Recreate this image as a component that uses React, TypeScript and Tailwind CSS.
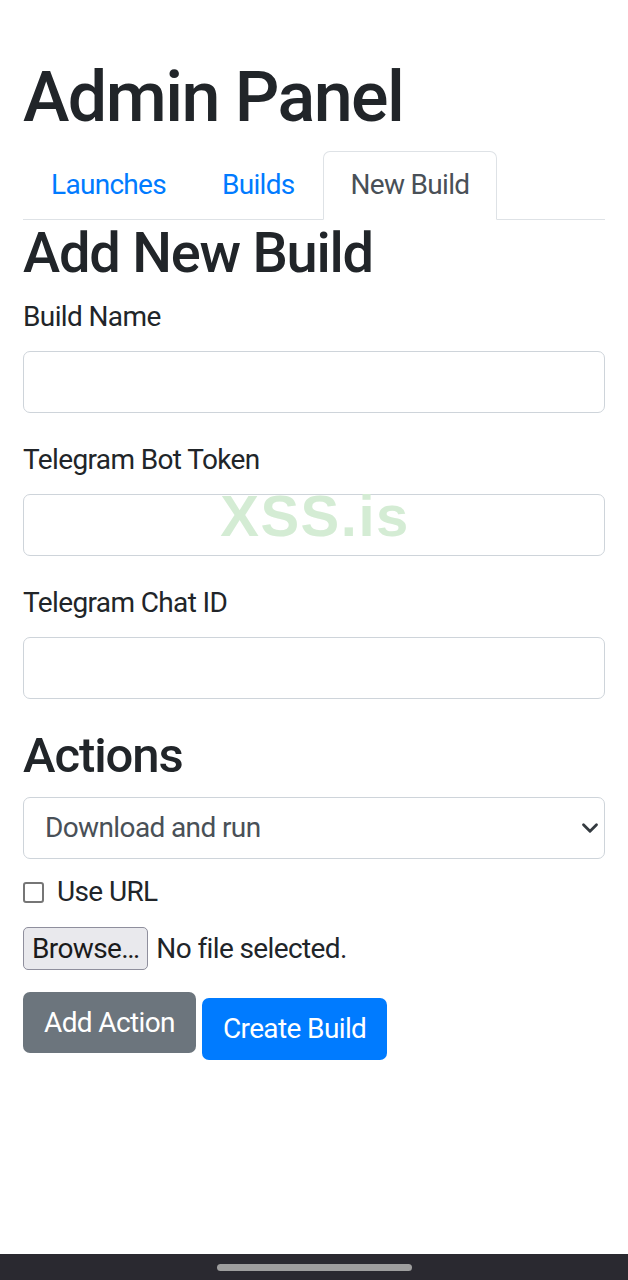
import { ChevronDown } from "lucide-react";

const fields = ["Build Name", "Telegram Bot Token", "Telegram Chat ID"];

const App = () => {
  return (
    <div className="relative flex min-h-[1280px] w-[628px] flex-col bg-white font-['Roboto',sans-serif] text-[28px] leading-[42px] tracking-[-0.62px] text-[#212529]">
      <div className="flex-1 px-[23px] pt-[55px]">
        <h1 className="h-[84px] text-[70px] font-medium leading-[84px] tracking-[-1.55px]">Admin Panel</h1>

        <nav className="mt-[12px] flex border-b border-[#dee2e6]">
          <a className="px-[28px] py-[13px] tracking-[-0.7px] text-[#007bff]">Launches</a>
          <a className="px-[28px] py-[13px] tracking-[-0.7px] text-[#007bff]">Builds</a>
          <a className="-mb-px rounded-t-[7px] border border-[#dee2e6] border-b-white bg-white px-[27px] py-[12px] tracking-[-0.7px] text-[#495057]">
            New Build
          </a>
        </nav>

        <h2 className="text-[56px] font-medium leading-[67px] tracking-[-1.24px]">Add New Build</h2>

        <div className="mt-[9px] flex flex-col gap-[26px]">
          {fields.map((label) => (
            <div key={label} className="flex flex-col">
              <label>{label}</label>
              <input className="mt-[13px] h-[62px] w-full rounded-[7px] border border-[#ced4da] bg-white px-[21px]" />
            </div>
          ))}
        </div>

        <h3 className="mt-[27px] text-[49px] font-medium leading-[59px] tracking-[-1.08px]">Actions</h3>

        <div className="mt-[12px] flex h-[62px] items-center justify-between rounded-[7px] border border-[#ced4da] pl-[21px] pr-[1px] text-[#495057]">
          <span>Download and run</span>
          <ChevronDown className="h-[26px] w-[26px] text-[#343a40]" strokeWidth={2.6} />
        </div>

        <label className="mt-[12px] flex items-center gap-[13px]">
          <span className="h-[21px] w-[21px] rounded-[3px] border-2 border-[#767676] bg-white" />
          Use URL
        </label>

        <div className="mt-[14px] flex items-center gap-[8px]">
          <button className="h-[43px] rounded-[5px] border border-[#8f8f9d] bg-[#e9e9ed] px-[8px] leading-[40px] text-[#1b1b1b]">
            Browse…
          </button>
          <span>No file selected.</span>
        </div>

        <div className="mt-[22px] flex items-start gap-[6px]">
          <button className="h-[61px] rounded-[7px] bg-[#6c757d] px-[21px] text-white">Add Action</button>
          <button className="mt-[6px] h-[62px] rounded-[7px] bg-[#007bff] px-[21px] text-white">Create Build</button>
        </div>
      </div>

      <div className="pointer-events-none absolute left-0 top-[487px] w-full pl-[2px] text-center font-['Liberation_Sans',sans-serif] text-[58px] font-bold leading-[58px] tracking-[1.5px] text-[#d4ecd4]">
        XSS.is
      </div>

      <div className="flex h-[26px] items-center justify-center bg-[#2a2930]">
        <div className="h-[7px] w-[195px] rounded-full bg-[#9e9e9e]" />
      </div>
    </div>
  );
};

export default App;
